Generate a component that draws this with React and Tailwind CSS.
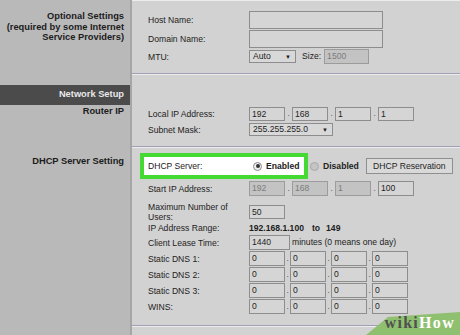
import React from 'react'

const sans = "font-['Liberation_Sans',Arial,sans-serif]"

function Field({ w = 'w-[36px]', h = 'h-[15px]', value, off }) {
  return (
    <div className={`${w} ${h} shrink-0 border flex items-center pl-[2px] text-[8.6px] leading-none ${off ? 'bg-[#c3c3c3] border-[#9c9c9c] text-[#7c7c7c]' : 'bg-[#d5d5d5] border-[#8d8d8d] text-[#1e1e1e]'}`}>
      {value}
    </div>
  )
}

function Label({ children, className = '' }) {
  return <div className={`w-[101px] shrink-0 text-[8.6px] leading-[10px] text-[#222] ${className}`}>{children}</div>
}

function Quad({ values, dot = 'w-[7px]', h = 'h-[15px]', off = [] }) {
  return (
    <div className="flex items-center">
      {values.map((v, i) => (
        <React.Fragment key={i}>
          {i > 0 && <span className={`${dot} shrink-0 text-center text-[8px] leading-none text-[#333]`}>.</span>}
          <Field h={h} value={v} off={off.includes(i)} />
        </React.Fragment>
      ))}
    </div>
  )
}

function Select({ w, value }) {
  return (
    <div className={`${w} h-[13px] shrink-0 border border-[#8d8d8d] bg-[#d8d8d8] flex items-center justify-between pl-[3px] pr-[4px] text-[8.6px] leading-none text-[#1e1e1e]`}>
      <span>{value}</span>
      <span className="text-[6px]">▼</span>
    </div>
  )
}

function Radio({ on }) {
  return (
    <div className={`w-[9px] h-[9px] shrink-0 rounded-full border flex items-center justify-center ${on ? 'bg-[#efefef] border-[#8a8a8a]' : 'bg-[#c4c4c4] border-[#a8a8a8]'}`}>
      {on && <div className="w-[4px] h-[4px] rounded-full bg-[#333]" />}
    </div>
  )
}

const sep = 'border-t border-t-[#9fa0b6] shadow-[inset_0_1px_0_#ececec]'
const leftCell = 'w-[130px] shrink-0 bg-[#b9b9b9] text-right font-bold text-[9.3px] text-[#1c1c1c]'
const rightCell = 'flex-1 border-l-2 border-l-[#a6a6a6] pl-4 flex flex-col'

export default function App() {
  return (
    <div className={`${sans} w-[460px] h-[335px] overflow-hidden relative flex flex-col bg-[#d2d2d2]`}>
      {/* Optional settings */}
      <div className="flex h-[73px]">
        <div className={`${leftCell} pt-[11px] pr-[6px] leading-[10.5px]`}>
          <div>Optional Settings</div>
          <div>(required by some Internet</div>
          <div>Service Providers)</div>
        </div>
        <div className={`${rightCell} shadow-[inset_0_1px_0_#ececec] pt-[11px]`}>
          <div className="flex items-center h-[18px]">
            <Label>Host Name:</Label>
            <Field w="w-[134px]" h="h-[18px]" />
          </div>
          <div className="flex items-center h-[18px] mt-[1px]">
            <Label>Domain Name:</Label>
            <Field w="w-[134px]" h="h-[18px]" />
          </div>
          <div className="flex items-center h-[15px] mt-[1px]">
            <Label>MTU:</Label>
            <Select w="w-[47px]" value="Auto" />
            <span className="ml-[6px] text-[8.6px] text-[#222]">Size:</span>
            <div className="ml-[3px]">
              <Field w="w-[45px]" value="1500" off />
            </div>
          </div>
        </div>
      </div>

      {/* Network setup */}
      <div className="flex h-[73px]">
        <div className={`${leftCell} pt-[12px]`}>
          <div className="h-[20px] bg-[#4b4b4b] text-[#e8e8e8] flex items-center justify-end pr-[6px]">Network Setup</div>
          <div className="h-[12px] leading-[12px] pr-[6px]">Router IP</div>
        </div>
        <div className={`${rightCell} ${sep}`}>
          <div className="flex items-center h-[14px] mt-[33px]">
            <Label>Local IP Address:</Label>
            <Quad values={['192', '168', '1', '1']} h="h-[14px]" />
          </div>
          <div className="flex items-center h-[13px] mt-[2px]">
            <Label>Subnet Mask:</Label>
            <Select w="w-[84px]" value="255.255.255.0" />
          </div>
        </div>
      </div>

      {/* DHCP */}
      <div className="flex h-[179px]">
        <div className={`${leftCell} pt-[9px] pr-[6px] leading-[12px]`}>DHCP Server Setting</div>
        <div className={`${rightCell} ${sep}`}>
          <div className="flex items-center h-[26px] mt-[6px] -ml-2">
            <div className="w-[168px] h-full border-4 border-[#45d933] bg-white flex items-center pl-[4px]">
              <Label>DHCP Server:</Label>
              <div className="ml-[4px]"><Radio on /></div>
              <span className="ml-[4px] font-bold text-[8.6px] text-[#222]">Enabled</span>
            </div>
            <div className="ml-[2px]"><Radio /></div>
            <span className="ml-[4px] font-bold text-[8.6px] text-[#222]">Disabled</span>
            <div className="ml-[7px] h-[16px] w-[87px] border border-[#8f8f8f] bg-[#d9d9d9] flex items-center justify-center text-[8.6px] text-[#1e1e1e]">DHCP Reservation</div>
          </div>
          <div className="flex items-center h-[15px] mt-[2px]">
            <Label>Start IP Address:</Label>
            <Quad values={['192', '168', '1', '100']} off={[0, 1, 2]} />
          </div>
          <div className="flex items-center h-[20px] mt-[6px]">
            <Label>Maximum Number of<br />Users:</Label>
            <Field h="h-[14px]" value="50" />
          </div>
          <div className="flex items-center h-[10px] mt-[1px]">
            <Label>IP Address Range:</Label>
            <span className="font-bold text-[8.6px] text-[#1c1c1c]">192.168.1.100</span>
            <span className="ml-[8px] font-bold text-[8.6px] text-[#1c1c1c]">to</span>
            <span className="ml-[6px] font-bold text-[8.6px] text-[#1c1c1c]">149</span>
          </div>
          <div className="flex items-center h-[15px] mt-[2px]">
            <Label>Client Lease Time:</Label>
            <Field w="w-[41px]" value="1440" />
            <span className="ml-[2px] text-[8.6px] text-[#222]">minutes (0 means one day)</span>
          </div>
          {['Static DNS 1:', 'Static DNS 2:', 'Static DNS 3:', 'WINS:'].map(l => (
            <div key={l} className="flex items-center h-[15px] mt-[1px]">
              <Label>{l}</Label>
              <Quad values={['0', '0', '0', '0']} dot="w-[5px]" />
            </div>
          ))}
        </div>
      </div>

      <div className="flex flex-1">
        <div className="w-[130px] shrink-0 bg-[#b9b9b9]" />
        <div className={`flex-1 border-l-2 border-l-[#a6a6a6] ${sep}`} />
      </div>

      {/* wikiHow mark */}
      <svg className="absolute right-0 bottom-0" width="94" height="23" viewBox="0 0 94 23">
        <polygon points="22,5 94,0 94,23 0,23" fill="#8fc06f" />
      </svg>
      <div className="absolute right-[5px] bottom-[4px] font-['Liberation_Serif',serif] font-bold text-[16px] leading-none tracking-[1.3px]">
        <span className="text-[#505050]">wiki</span><span className="text-white">How</span>
      </div>
    </div>
  )
}
